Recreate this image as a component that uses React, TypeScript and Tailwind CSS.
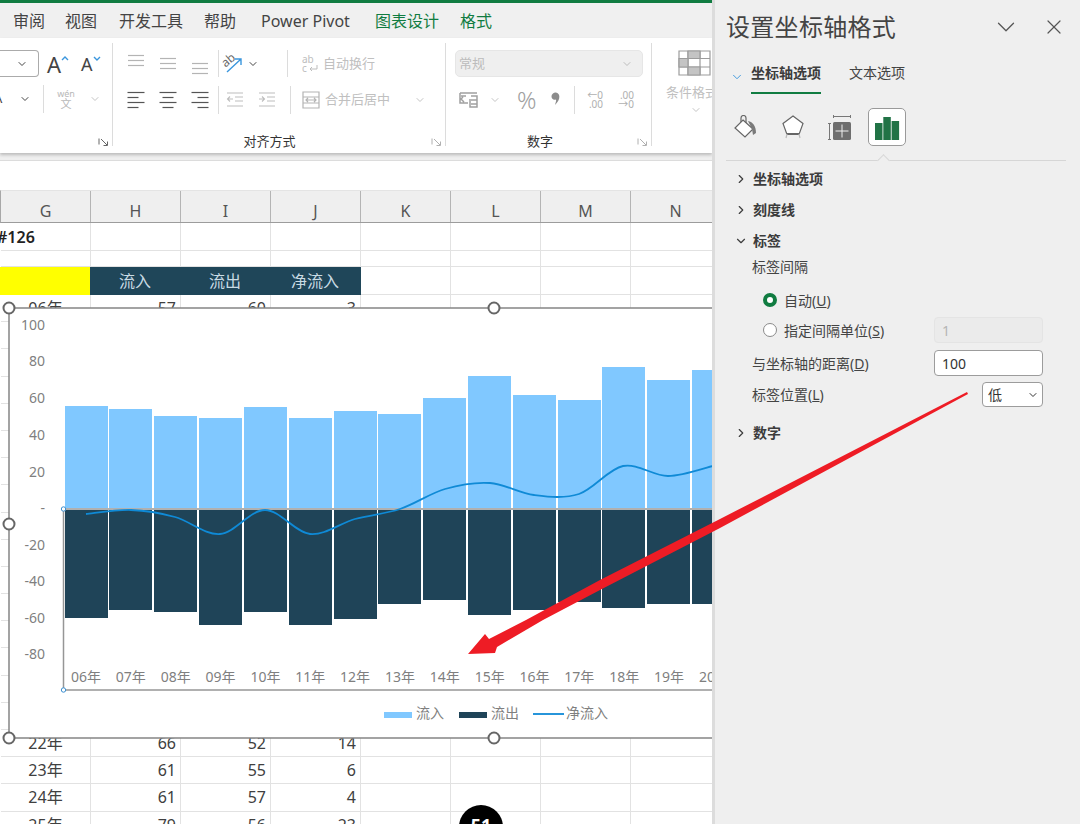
import { ChevronDown, ChevronRight, X } from "lucide-react";

const columns = ["G", "H", "I", "J", "K", "L", "M", "N"];

const rows = [
  ["06年", 57, 60, -3], ["07年", 55, 56, -1], ["08年", 51, 57, -6], ["09年", 49, 63, -14],
  ["10年", 56, 57, -1], ["11年", 49, 63, -14], ["12年", 54, 60, -6], ["13年", 52, 52, 0],
  ["14年", 60, 50, 10], ["15年", 73, 59, 14], ["16年", 63, 55, 8], ["17年", 59, 51, 8],
  ["18年", 77, 54, 23], ["19年", 70, 52, 18], ["20年", 75, 52, 23], ["21年", 68, 54, 14],
  ["22年", 66, 52, 14], ["23年", 61, 55, 6], ["24年", 61, 57, 4], ["25年", 79, 56, 23],
];

const barX = [65, 109, 154, 199, 244, 289, 334, 378, 423, 468, 513, 558, 602, 647, 692];
const inTops = [406, 409, 416, 418, 407, 418, 411, 414, 398, 376, 395, 400, 367, 380, 370];
const outBottoms = [618, 610, 612, 625, 612, 625, 619, 604, 600, 615, 610, 602, 608, 604, 604];
const years = ["06年", "07年", "08年", "09年", "10年", "11年", "12年", "13年", "14年", "15年", "16年", "17年", "18年", "19年", "20年"];
const yTicks: [string, number][] = [
  ["100", 325], ["80", 361], ["60", 398], ["40", 435], ["20", 472], ["-", 508],
  ["-20", 545], ["-40", 581], ["-60", 618], ["-80", 654],
];
const netLine: [number, number][] = [
  [86, 514], [131, 510], [175, 517], [220, 534], [265, 510], [310, 534], [355, 519],
  [400, 509], [445, 489], [490, 483], [534, 495], [579, 494], [623, 466], [668, 476], [713, 466],
];

function smooth(points: [number, number][]) {
  let d = `M${points[0][0]} ${points[0][1]}`;
  for (let i = 0; i < points.length - 1; i++) {
    const p0 = points[Math.max(i - 1, 0)];
    const p1 = points[i];
    const p2 = points[i + 1];
    const p3 = points[Math.min(i + 2, points.length - 1)];
    const c1x = p1[0] + (p2[0] - p0[0]) / 6;
    const c1y = p1[1] + (p2[1] - p0[1]) / 6;
    const c2x = p2[0] - (p3[0] - p1[0]) / 6;
    const c2y = p2[1] - (p3[1] - p1[1]) / 6;
    d += ` C${c1x} ${c1y} ${c2x} ${c2y} ${p2[0]} ${p2[1]}`;
  }
  return d;
}

function Lines({ widths, align, top = 0, color = "#a6a6a6" }: { widths: number[]; align: "l" | "c" | "r"; top?: number; color?: string }) {
  return (
    <svg width="18" height="24" viewBox="0 0 18 24" fill="none" stroke={color} strokeWidth="1.2">
      {widths.map((w, i) => {
        const x = align === "l" ? 0.5 : align === "c" ? 9 - w / 2 : 17.5 - w;
        const y = top + 4.5 + i * 5;
        return <line key={i} x1={x} x2={x + w} y1={y} y2={y} />;
      })}
    </svg>
  );
}

function Launcher({ color = "#7a7a7a" }: { color?: string }) {
  return (
    <svg width="11" height="10" viewBox="0 0 11 10" fill="none" stroke={color} strokeWidth="1">
      <path d="M1 1.5v6M3 2l6 6M9.5 4.5v4h-4" />
    </svg>
  );
}

function Chevron({ className = "text-[#777]" }: { className?: string }) {
  return <ChevronDown className={`h-3 w-3 ${className}`} strokeWidth={2} />;
}

function IconCell({ children, w = "w-[32px]" }: { children: React.ReactNode; w?: string }) {
  return <div className={`flex h-full items-center justify-center ${w}`}>{children}</div>;
}

function GroupLabel({ label, launcherColor }: { label?: string; launcherColor?: string }) {
  return (
    <div className="mt-auto mb-[-7px] grid h-[22px] grid-cols-[1fr_auto_1fr] items-center text-[13px] text-[#333]">
      <span />
      <span className="mr-[26px]">{label}</span>
      <span className="justify-self-end pr-[3px]">
        <Launcher color={launcherColor} />
      </span>
    </div>
  );
}

function Ribbon() {
  return (
    <div className="z-10 flex h-[115px] shrink-0 bg-white pt-[5px] shadow-[0_2px_3px_rgba(0,0,0,0.22)]">
      {/* font */}
      <div className="flex h-[103px] w-[113px] shrink-0 flex-col border-r border-[#dcdcdc]">
        <div className="mt-[7px] flex h-[27px] items-center">
          <div className="flex h-[27px] w-[39px] items-center justify-end rounded-r-[4px] border border-l-0 border-[#ababab] pr-[10px]">
            <Chevron className="text-[#444]" />
          </div>
          <span className="ml-[8px] text-[22px] leading-none text-[#444]">A</span>
          <svg width="8" height="14" viewBox="0 0 8 14" fill="none" stroke="#3a96dd" strokeWidth="1.4" className="mb-[8px]">
            <path d="M1 7l3-3 3 3" />
          </svg>
          <span className="ml-[12px] text-[18px] leading-none text-[#444]">A</span>
          <svg width="8" height="14" viewBox="0 0 8 14" fill="none" stroke="#3a96dd" strokeWidth="1.4" className="mb-[8px]">
            <path d="M1 4l3 3 3-3" />
          </svg>
        </div>
        <div className="mt-[8px] flex h-[28px] items-center">
          <span className="ml-[-6px] w-[25px] text-[13px] text-[#444]">A</span>
          <Chevron className="text-[#444]" />
          <div className="ml-[12px] h-[28px] w-px bg-[#dcdcdc]" />
          <div className="ml-[7px] flex w-[30px] flex-col items-center text-[9px] leading-[10px] text-[#b8b8b8]">
            <span>wén</span>
            <span className="text-[11px]">文</span>
          </div>
          <Chevron className="ml-[8px] text-[#c4c4c4]" />
        </div>
        <GroupLabel launcherColor="#666" />
      </div>

      {/* alignment */}
      <div className="flex h-[103px] w-[333px] shrink-0 flex-col border-r border-[#dcdcdc] pl-[7px]">
        <div className="mt-[7px] flex h-[27px] items-center">
          <IconCell><Lines widths={[16, 16, 16]} align="c" top={-1} color="#b4b4b4" /></IconCell>
          <IconCell><Lines widths={[16, 16, 16]} align="c" top={2} color="#b4b4b4" /></IconCell>
          <IconCell><Lines widths={[16, 16, 16]} align="c" top={7} color="#b4b4b4" /></IconCell>
          <div className="ml-[2px] h-[27px] w-px bg-[#dcdcdc]" />
          <IconCell w="w-[28px]">
            <svg width="22" height="22" viewBox="0 0 22 22" fill="none">
              <text x="1" y="12" fontSize="12" fill="#666" transform="rotate(-40 6 10)">ab</text>
              <path d="M5 19L19 6M13 6H19v6" stroke="#3a96dd" strokeWidth="1.4" />
            </svg>
          </IconCell>
          <Chevron className="text-[#444]" />
          <div className="ml-[28px] h-[27px] w-px bg-[#dcdcdc]" />
          <div className="ml-[14px] flex items-center text-[13px] text-[#c0c0c0]">
            <svg width="17" height="18" viewBox="0 0 17 18" fill="none" className="mr-[4px]">
              <text x="0" y="8" fontSize="10" fill="#bdbdbd">ab</text>
              <text x="0" y="17" fontSize="10" fill="#bdbdbd">c</text>
              <path d="M15 10v4h-7M10 12l-2 2 2 2" stroke="#bdbdbd" strokeWidth="1" />
            </svg>
            自动换行
          </div>
        </div>
        <div className="mt-[9px] flex h-[28px] items-center">
          <IconCell><Lines widths={[17, 11, 17, 11]} align="l" top={0} color="#555" /></IconCell>
          <IconCell><Lines widths={[17, 11, 17, 11]} align="c" top={0} color="#555" /></IconCell>
          <IconCell><Lines widths={[17, 11, 17, 11]} align="r" top={0} color="#555" /></IconCell>
          <div className="ml-[2px] h-[28px] w-px bg-[#dcdcdc]" />
          <IconCell>
            <svg width="18" height="18" viewBox="0 0 18 18" fill="none" stroke="#bdbdbd" strokeWidth="1.1">
              <path d="M1 2h16M9 6h8M9 10h8M1 15h16M7 8H1.5M4 5.5L1.500 8 4 10.500" />
            </svg>
          </IconCell>
          <IconCell>
            <svg width="18" height="18" viewBox="0 0 18 18" fill="none" stroke="#bdbdbd" strokeWidth="1.1">
              <path d="M1 2h16M9 6h8M9 10h8M1 15h16M1 8h5.500M4 5.500L6.500 8 4 10.500" />
            </svg>
          </IconCell>
          <div className="ml-[7px] h-[28px] w-px bg-[#dcdcdc]" />
          <div className="ml-[11px] flex items-center text-[13px] text-[#c0c0c0]">
            <svg width="18" height="18" viewBox="0 0 18 18" fill="none" stroke="#b4b4b4" strokeWidth="1.2" className="mr-[5px]">
              <path d="M1 1h16v16H1zM1 6h16M1 12h16M4 9h10M6 7l-2 2 2 2M12 7l2 2-2 2" />
            </svg>
            合并后居中
            <Chevron className="ml-[24px] text-[#c4c4c4]" />
          </div>
        </div>
        <GroupLabel label="对齐方式" launcherColor="#b0b0b0" />
      </div>

      {/* number */}
      <div className="flex h-[103px] w-[206px] shrink-0 flex-col border-r border-[#dcdcdc] pl-[9px]">
        <div className="mt-[7px] flex h-[27px] w-[188px] items-center justify-between rounded-[5px] border border-[#e6e6e6] bg-[#efefef] pl-[3px] pr-[9px] text-[13px] text-[#bcbcbc]">
          常规
          <Chevron className="text-[#bdbdbd]" />
        </div>
        <div className="mt-[9px] flex h-[28px] items-center text-[#a8a8a8]">
          <svg width="20" height="18" viewBox="0 0 20 18" fill="none" stroke="#a0a0a0" strokeWidth="1.500" className="ml-[4px]">
            <path d="M1 2h17M1 2v10h8M7 5H2M12 5h6v11h-7V8M12 9h6M12 13h6M4 6l-2 2 3 3" />
          </svg>
          <Chevron className="ml-[10px] text-[#c4c4c4]" />
          <span className="ml-[16px] w-[22px] text-[24px] font-light leading-none text-[#a0a0a0]">%</span>
          <svg width="10" height="16" viewBox="0 0 10 16" fill="#8c8c8c" className="ml-[12px]">
            <path d="M2 1.500a3.800 3.800 0 0 1 5.500.5c1.800 2.500.8 7-3.500 11 1-3 1.300-4.500 1-5.500-2.500.8-4.500-.5-4.500-3 0-1.200.5-2.200 1.500-3z" />
          </svg>
          <div className="ml-[13px] h-[28px] w-px bg-[#dcdcdc]" />
          <div className="ml-[6px] flex w-[22px] flex-col text-right text-[10px] leading-[9px] text-[#b0b0b0]">
            <span>←0</span>
            <span>.00</span>
          </div>
          <div className="ml-[9px] flex w-[22px] flex-col text-right text-[10px] leading-[9px] text-[#b0b0b0]">
            <span>.00</span>
            <span>→0</span>
          </div>
        </div>
        <GroupLabel label="数字" launcherColor="#b0b0b0" />
      </div>

      {/* styles */}
      <div className="flex h-[103px] flex-1 flex-col items-start overflow-hidden pl-[14px]">
        <svg width="33" height="26" viewBox="0 0 33 26" className="ml-[12px] mt-[7px]" stroke="#9c9c9c" strokeWidth="1.200" fill="none">
          <path d="M1 1h31v24H1z" />
          <path d="M1 8.500h31M1 17h31M10 1v24M22 1v24" />
          <path d="M10 1h12v7.500H10zM1 8.500h9V17H1zM10 17h12v8H10z" fill="#c4c4c4" />
        </svg>
        <span className="mt-[7px] whitespace-nowrap text-[13px] text-[#c0c0c0]">条件格式</span>
        <Chevron className="ml-[24px] mt-[1px] text-[#c4c4c4]" />
      </div>
    </div>
  );
}

function SheetGrid() {
  const cell = "h-full w-[90px] shrink-0 border-r border-b border-[#e2e2e2]";
  const blanks = [0, 1, 2, 3];
  return (
    <div className="pl-px text-[16px] text-[#404040]">
      <div className="flex h-[28px]">
        <div className={`${cell} text-[16px] font-semibold leading-[29px] text-[#222]`}>
          <span className="ml-[-4px]">#126</span>
        </div>
        {[0, 1, 2, 3, 4, 5, 6].map((i) => <div key={i} className={cell} />)}
      </div>
      <div className="flex h-[16px]">
        {[0, 1, 2, 3, 4, 5, 6, 7].map((i) => <div key={i} className={cell} />)}
      </div>
      <div className="flex h-[28px]">
        <div className="ml-[-1px] h-full w-[90px] shrink-0 bg-[#ffff00]" />
        <div className="flex h-full w-[271px] shrink-0 bg-[#1f4659] text-[#c9dbe4]">
          {["流入", "流出", "净流入"].map((t) => (
            <div key={t} className="flex h-full w-[90px] shrink-0 items-center justify-center">{t}</div>
          ))}
        </div>
        {blanks.map((i) => <div key={i} className={cell} />)}
      </div>
      {rows.map(([year, a, b, c]) => (
        <div key={year} className="flex h-[27.2px]">
          <div className={`${cell} flex items-center justify-center`}>{year}</div>
          {[a, b, c].map((v, i) => (
            <div key={i} className={`${cell} flex items-center justify-end pr-[4px]`}>{v}</div>
          ))}
          {blanks.map((i) => <div key={i} className={cell} />)}
        </div>
      ))}
    </div>
  );
}

function Handle({ cx, cy }: { cx: number; cy: number }) {
  return <circle cx={cx} cy={cy} r="5.500" fill="#fff" stroke="#666" strokeWidth="2" />;
}

function Chart() {
  return (
    <svg width="712" height="824" viewBox="0 0 712 824" className="absolute left-0 top-0" fontSize="14">
      <rect x="9" y="308" width="720" height="430" fill="#fff" stroke="#858585" strokeWidth="1.500" />
      {barX.map((x, i) => (
        <g key={x}>
          <rect x={x} y={inTops[i]} width="43" height={508 - inTops[i]} fill="#80c8ff" />
          <rect x={x} y="510" width="43" height={outBottoms[i] - 510} fill="#1f4458" />
        </g>
      ))}
      <path d="M63.500 509V690M63.500 690H712M63.500 509H712" stroke="#969696" strokeWidth="1.500" fill="none" />
      <path d={smooth(netLine)} fill="none" stroke="#0f8ad6" strokeWidth="1.800" />
      {yTicks.map(([t, y]) => (
        <text key={y} x="45" y={y + 5} textAnchor="end" fill="#7f7f7f">{t}</text>
      ))}
      {years.map((t, i) => (
        <text key={t} x={86 + i * 44.85} y="682" textAnchor="middle" fill="#7f7f7f">{t}</text>
      ))}
      <rect x="384" y="712" width="28" height="6" fill="#80c8ff" />
      <text x="416" y="718" fill="#7f7f7f">流入</text>
      <rect x="459" y="712" width="28" height="6" fill="#1f4458" />
      <text x="491" y="718" fill="#7f7f7f">流出</text>
      <line x1="533" x2="564" y1="714" y2="714" stroke="#0f8ad6" strokeWidth="1.800" />
      <text x="566" y="718" fill="#7f7f7f">净流入</text>
      <circle cx="63.500" cy="509" r="2.200" fill="#fff" stroke="#3b8fd0" />
      <circle cx="63.500" cy="690" r="2.200" fill="#fff" stroke="#3b8fd0" />
      <Handle cx={9} cy={308} />
      <Handle cx={494} cy={308} />
      <Handle cx={9} cy={524} />
      <Handle cx={9} cy={738} />
      <Handle cx={494} cy={738} />
    </svg>
  );
}

function Section({ label, open = false }: { label: string; open?: boolean }) {
  return (
    <div className="flex h-[31px] items-center pl-[8px] text-[14px] font-semibold text-[#3c3c3c]">
      {open ? <ChevronDown className="h-[14px] w-[14px]" strokeWidth={2} /> : <ChevronRight className="h-[14px] w-[14px]" strokeWidth={2} />}
      <span className="ml-[5px]">{label}</span>
    </div>
  );
}

function Radio({ checked, label, hot }: { checked?: boolean; label: string; hot: string }) {
  return (
    <div className="flex items-center text-[14px] text-[#444]">
      <span className={checked ? "h-[14px] w-[14px] rounded-full border-[4px] border-[#107c41] bg-white" : "h-[14px] w-[14px] rounded-full border border-[#8a8a8a] bg-white"} />
      <span className="ml-[7px]">
        {label}(<span className="underline">{hot}</span>)
      </span>
    </div>
  );
}

function Panel() {
  return (
    <aside className="flex w-[368px] shrink-0 flex-col border-l-[3px] border-[#dcdcdc] bg-[#efefef] pl-[11px] pr-[14px] text-[#444]">
      <div className="flex h-[54px] shrink-0 items-center">
        <span className="text-[24px] leading-none tracking-[0.3px] text-[#444]">设置坐标轴格式</span>
        <ChevronDown className="ml-auto h-[30px] w-[30px] text-[#555]" strokeWidth={1} />
        <X className="ml-[21px] h-[24px] w-[24px] text-[#555]" strokeWidth={1.2} />
      </div>
      <div className="mt-[8px] flex h-[31px] shrink-0 items-start text-[14px]">
        <ChevronDown className="ml-[4px] mt-[8px] h-[14px] w-[14px] text-[#3a96dd]" strokeWidth={1.6} />
        <span className="ml-[7px] border-b-[2px] border-[#107c41] pb-[9px] font-semibold text-[#3c3c3c]">坐标轴选项</span>
        <span className="ml-[28px] text-[#444]">文本选项</span>
      </div>
      <div className="relative flex h-[68px] shrink-0 items-start border-b border-[#d6d6d6] pt-[15px]">
        <div className="ml-[-1px] flex h-[40px] w-[40px] items-center justify-center">
          <svg width="26" height="26" viewBox="0 0 26 26" fill="none" stroke="#666" strokeWidth="1.200">
            <path d="M11 5l10 9-8 8-10-9z" fill="#fff" />
            <path d="M9 7V3a2.500 2.500 0 0 1 5 0v5" />
            <path d="M16 6c5 1 8 5 8 12l-3 2-1-6z" fill="#7a7a7a" stroke="none" />
          </svg>
        </div>
        <div className="ml-[8px] flex h-[40px] w-[40px] items-center justify-center">
          <svg width="26" height="28" viewBox="0 0 26 28" fill="none" stroke="#666" strokeWidth="1.200">
            <path d="M13 2l10 7.500-3.800 10.500H6.800L3 9.500z" fill="#fff" />
            <path d="M7 20h12" strokeWidth="2" />
            <path d="M6 24l1-4M20 24l-1-4" stroke="#bbb" />
          </svg>
        </div>
        <div className="ml-[6px] flex h-[40px] w-[40px] items-center justify-center">
          <svg width="26" height="28" viewBox="0 0 26 28" fill="none" stroke="#777" strokeWidth="1">
            <path d="M7.500 2.500h17M7.500 1v3M24.500 1v3M2 9.500h3M2 25.500h3M3.500 9.500v16" />
            <rect x="7" y="8" width="18" height="18" rx="1.500" fill="#6e6e6e" stroke="none" />
            <path d="M16 10.500v13M9.500 17h13" stroke="#efefef" />
          </svg>
        </div>
        <div className="ml-[9px] flex h-[38px] w-[38px] items-center justify-center rounded-[5px] border border-[#9a9a9a] bg-white">
          <svg width="26" height="26" viewBox="0 0 26 26" fill="#217346">
            <rect x="1" y="9" width="7.500" height="17" />
            <rect x="9.300" y="3" width="7.500" height="23" />
            <rect x="17.600" y="7" width="7.500" height="19" />
          </svg>
        </div>
        <span className="absolute bottom-[-5px] left-[153px] h-[9px] w-[9px] rotate-45 border-l border-t border-[#d6d6d6] bg-[#efefef]" />
      </div>
      <div className="pt-[2px]">
        <Section label="坐标轴选项" />
        <Section label="刻度线" />
        <Section label="标签" open />
      </div>
      <div className="ml-[26px] mt-[-1px] flex h-[22px] items-center text-[14px]">标签间隔</div>
      <div className="ml-[37px] mt-[10px] flex h-[26px] items-center"><Radio checked label="自动" hot="U" /></div>
      <div className="ml-[37px] mr-[23px] mt-[4px] flex h-[26px] items-center justify-between">
        <Radio label="指定间隔单位" hot="S" />
        <div className="flex h-[26px] w-[109px] items-center rounded-[4px] border border-[#e4e4e4] bg-[#ebebeb] px-[7px] text-[14px] text-[#b5b5b5]">1</div>
      </div>
      <div className="ml-[26px] mr-[23px] mt-[7px] flex h-[26px] items-center justify-between text-[14px]">
        <span>与坐标轴的距离(<span className="underline">D</span>)</span>
        <div className="flex h-[26px] w-[109px] items-center rounded-[4px] border border-[#9c9c9c] bg-white px-[7px] text-[#333]">100</div>
      </div>
      <div className="ml-[26px] mr-[23px] mt-[6px] flex h-[25px] items-center justify-between text-[14px]">
        <span>标签位置(<span className="underline">L</span>)</span>
        <div className="flex h-[25px] w-[61px] items-center justify-between rounded-[4px] border border-[#9c9c9c] bg-white pl-[5px] pr-[3px] text-[#333]">
          低
          <Chevron className="text-[#333]" />
        </div>
      </div>
      <div className="mt-[10px]">
        <Section label="数字" />
      </div>
    </aside>
  );
}

export default function App() {
  return (
    <div className="relative flex h-[824px] w-[1080px] overflow-hidden bg-white [font-family:'Noto_Sans','Noto_Sans_CJK_SC',sans-serif]">
      <main className="relative flex w-[712px] shrink-0 flex-col overflow-hidden">
        <div className="h-[3px] shrink-0 bg-[#107c41]" />
        <div className="flex h-[35px] shrink-0 items-center bg-[#f0f0f0] pl-[13px] text-[16px] text-[#444]">
          <span>审阅</span>
          <span className="ml-[20px]">视图</span>
          <span className="ml-[22px]">开发工具</span>
          <span className="ml-[21px]">帮助</span>
          <span className="ml-[25px]">Power Pivot</span>
          <span className="ml-[25px] text-[#107c41]">图表设计</span>
          <span className="ml-[21px] text-[#107c41]">格式</span>
        </div>
        <Ribbon />
        <div className="h-[8px] shrink-0 border-b border-[#dcdcdc] bg-[#efefef]" />
        <div className="h-[29px] shrink-0 bg-white" />
        <div className="flex h-[33px] shrink-0 border-b border-[#9c9c9c] border-t border-l border-t-[#e4e4e4] border-l-[#a8a8a8] bg-[#efefef] text-[16px] text-[#555]">
          {columns.map((c) => (
            <div key={c} className="flex w-[90px] shrink-0 items-center justify-center border-r border-[#b4b4b4] pt-[8px]">{c}</div>
          ))}
        </div>
        <SheetGrid />
        <Chart />
        <div className="absolute left-[459px] top-[805px] flex h-[44px] w-[44px] justify-center rounded-full bg-black pt-[8px] text-[18px] font-bold leading-[24px] text-white">
          51
        </div>
      </main>
      <Panel />
      <svg width="1080" height="824" viewBox="0 0 1080 824" className="pointer-events-none absolute left-0 top-0">
        <polygon points="468,654 485,634 489,639 526,620 600,580 720,519 967,392 968,394 720,528 600,590 543,620 497,647 495,653" fill="#ee1c25" />
      </svg>
    </div>
  );
}
